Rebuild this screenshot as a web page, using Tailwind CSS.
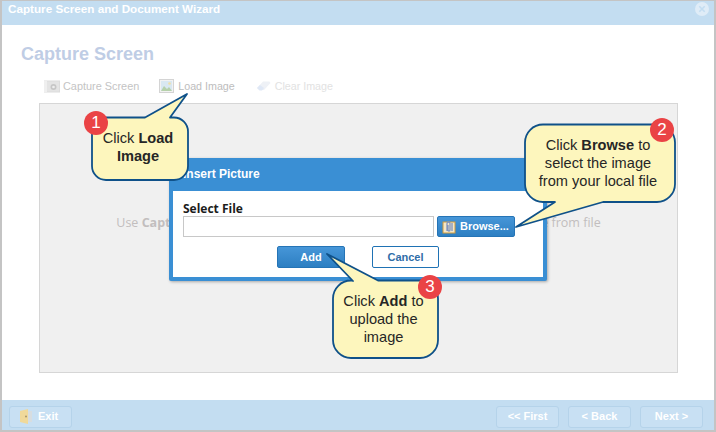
<!DOCTYPE html>
<html lang="en">
<head>
    <meta charset="UTF-8">
    <title>Capture Screen and Document Wizard</title>
    <script src="https://cdn.jsdelivr.net/npm/@tailwindcss/browser@4"></script>
</head>
<body class="w-[716px] h-[432px] overflow-hidden bg-white font-['Liberation_Sans',Arial,sans-serif]">
    <div class="relative w-[716px] h-[432px] flex flex-col border-x-2 border-t border-b-2 border-[#c4c4c4]">
        <!-- wizard header -->
        <div class="h-[24px] shrink-0 bg-[#c3ddf1] flex items-start justify-between pl-[6px] pr-[5px] pt-[1px]">
            <span class="text-[11.7px] font-bold text-white leading-[14px]">Capture Screen and Document Wizard</span>
            <svg width="14" height="14" viewBox="0 0 14 14">
                <circle cx="7" cy="7" r="7" fill="#dfecf7"/>
                <path d="M4.3 4.3l5.4 5.4M9.7 4.3l-5.4 5.4" stroke="#c3ddf1" stroke-width="1.6"/>
            </svg>
        </div>

        <!-- wizard body -->
        <div class="flex-1 flex flex-col bg-white pl-[19px]">
            <h1 class="mt-[17px] text-[18px] leading-[24px] font-bold text-[#bfcde5]">Capture Screen</h1>
            <div class="mt-[12px] ml-[23px] h-[16px] flex items-center text-[11px] text-[#c4c4c4]">
                <svg width="16" height="13" viewBox="0 0 16 13" class="mr-[3px]">
                    <rect x="0.5" y="1" width="15" height="11" fill="#e4e4e4" stroke="#dcdcdc"/>
                    <rect x="0" y="1" width="3" height="11" fill="#efefef"/>
                    <circle cx="9.5" cy="7" r="3" fill="#c6c6c6"/>
                    <circle cx="9.5" cy="7" r="1.3" fill="#eeeeee"/>
                </svg>
                <span class="text-[10.9px]">Capture Screen</span>
                <svg width="15" height="14" viewBox="0 0 15 14" class="ml-[20px] mr-[4px]">
                    <rect x="0.5" y="0.5" width="14" height="13" fill="#f2f2f2" stroke="#d4d4d4"/>
                    <rect x="2" y="2" width="11" height="10" fill="#d9e8f2"/>
                    <path d="M2 12l3-5 3 3 2-2 3 4z" fill="#b6d1ab"/>
                    <circle cx="10.5" cy="4.5" r="1.3" fill="#f0dfa6"/>
                </svg>
                <span class="text-[#bdbdbd] text-[10.7px]">Load Image</span>
                <svg width="15" height="12" viewBox="0 0 15 12" class="ml-[21px] mr-[4px]">
                    <path d="M1 8l6-6.500h6.500l1 1.500-6.500 7H3.500z" fill="#eef1f6"/>
                    <path d="M1 8l3-3 4 3-2 2.500H3.500z" fill="#dfe8f6"/>
                </svg>
                <span class="text-[#e2e2e2] text-[10.7px]">Clear Image</span>
            </div>
            <div class="mt-[9px] ml-[18px] w-[639px] h-[270px] shrink-0 bg-[#f0f0f0] border border-[#d6d6d6] flex items-center justify-center">
                <p class="text-[12.5px] text-[#c2bebe] font-['Open_Sans',sans-serif] whitespace-nowrap mt-[-29px]">Use <b>Capture Screen</b> to take a screenshot, or <b>Load Image</b> to use an image from file</p>
            </div>
        </div>

        <!-- wizard footer -->
        <div class="h-[30px] shrink-0 bg-[#c3ddf1] flex items-center justify-between pl-[7px] pr-[11px] pt-[3px] text-[11px] font-bold text-white">
            <div class="w-[63px] h-[22px] rounded-[3px] border border-[#b5d3ea] bg-[#c8e0f3] flex items-center pl-[10px] gap-[6px]">
                <svg width="12" height="15" viewBox="0 0 12 15">
                    <path d="M0 2l8-2v15l-8-2z" fill="#f0d99a"/>
                    <rect x="8" y="2" width="4" height="11" fill="#d7dde0"/>
                    <circle cx="6" cy="7.500" r="1" fill="#a8966a"/>
                </svg>
                <span>Exit</span>
            </div>
            <div class="flex gap-[9px]">
                <div class="w-[63px] h-[22px] rounded-[3px] border border-[#b5d3ea] bg-[#c8e0f3] flex items-center justify-center">&lt;&lt; First</div>
                <div class="w-[63px] h-[22px] rounded-[3px] border border-[#b5d3ea] bg-[#c8e0f3] flex items-center justify-center">&lt; Back</div>
                <div class="w-[63px] h-[22px] rounded-[3px] border border-[#b5d3ea] bg-[#c8e0f3] flex items-center justify-center">Next &gt;</div>
            </div>
        </div>
    </div>

    <!-- insert picture dialog -->
    <div class="absolute left-[169px] top-[158px] w-[378px] h-[123px] rounded-[2px] bg-[#3a8fd4] shadow-[1px_1px_3px_rgba(0,0,0,0.3)] flex flex-col px-[4px] pb-[4px]">
        <div class="h-[31px] mb-[2px] shrink-0 flex items-center pl-[10px] text-[12px] font-bold text-white">Insert Picture</div>
        <div class="flex-1 bg-white pl-[10px] pt-[11px]">
            <div class="text-[12px] leading-[14px] font-bold text-[#1c1c1c] font-['Open_Sans',sans-serif]">Select File</div>
            <div class="flex gap-[3px]">
                <div class="w-[251px] h-[21px] bg-white border border-[#c8c8c8]"></div>
                <div class="w-[78px] h-[21px] rounded-[2px] bg-gradient-to-b from-[#4696d8] to-[#2d7fc2] border border-[#2574b6] flex items-center pl-[4px] gap-[4px] text-[11px] font-bold text-white">
                    <svg width="14" height="14" viewBox="0 0 14 14">
                        <rect x="1" y="2" width="12" height="11" fill="#f3e7c8" stroke="#d09a3a"/>
                        <path d="M5 11V3.500a1.500 1.500 0 0 1 3 0V10a1 1 0 0 1-2 0V5M10 11V3" fill="none" stroke="#7f93bd" stroke-width="1.300"/>
                    </svg>
                    <span>Browse...</span>
                </div>
            </div>
            <div class="flex mt-[9px] ml-[94px] gap-[27px] text-[11px] font-bold">
                <div class="w-[68px] h-[22px] rounded-[2px] bg-gradient-to-b from-[#4696d8] to-[#2d7fc2] border border-[#2574b6] flex items-center justify-center text-white">Add</div>
                <div class="w-[67px] h-[22px] rounded-[2px] bg-white border border-[#1f72b4] flex items-center justify-center text-[#2f6da8]">Cancel</div>
            </div>
        </div>
    </div>

    <!-- callout shapes -->
    <svg class="absolute left-0 top-0" width="716" height="432" viewBox="0 0 716 432">
        <g fill="#fdf6bd" stroke="#0f5189" stroke-width="1.800" stroke-linejoin="round">
            <path d="M106 117.500H145L187 94L170 117.500H174a14 14 0 0 1 14 14V166a14 14 0 0 1-14 14H106a14 14 0 0 1-14-14V131.500a14 14 0 0 1 14-14z"/>
            <path d="M543 124.500H657a18 18 0 0 1 18 18V184a18 18 0 0 1-18 18H603L516 227L555 202H543a18 18 0 0 1-18-18V142.500a18 18 0 0 1 18-18z"/>
            <path d="M378 280.500H420a18 18 0 0 1 18 18V340a18 18 0 0 1-18 18H351a18 18 0 0 1-18-18V298.500a18 18 0 0 1 18-18L353 281L327 254z"/>
        </g>
        <g fill="#ea4345">
            <circle cx="96" cy="123" r="12"/>
            <circle cx="662" cy="130" r="12"/>
            <circle cx="430" cy="287" r="12"/>
        </g>
    </svg>

    <!-- callout text -->
    <div class="absolute left-[90px] top-[129px] w-[96px] text-center text-[14.6px] leading-[18px] text-[#262626]">Click <b>Load Image</b></div>
    <div class="absolute left-[523px] top-[136px] w-[150px] text-center text-[14.6px] leading-[18px] text-[#262626]">Click <b>Browse</b> to<br>select the image<br>from your local file</div>
    <div class="absolute left-[331px] top-[292px] w-[105px] text-center text-[14.6px] leading-[18px] text-[#262626]">Click <b>Add</b> to<br>upload the<br>image</div>
    <div class="absolute left-[84px] top-[111px] w-[24px] h-[24px] flex items-center justify-center text-[17px] text-white">1</div>
    <div class="absolute left-[650px] top-[118px] w-[24px] h-[24px] flex items-center justify-center text-[17px] text-white">2</div>
    <div class="absolute left-[418px] top-[275px] w-[24px] h-[24px] flex items-center justify-center text-[17px] text-white">3</div>
</body>
</html>
